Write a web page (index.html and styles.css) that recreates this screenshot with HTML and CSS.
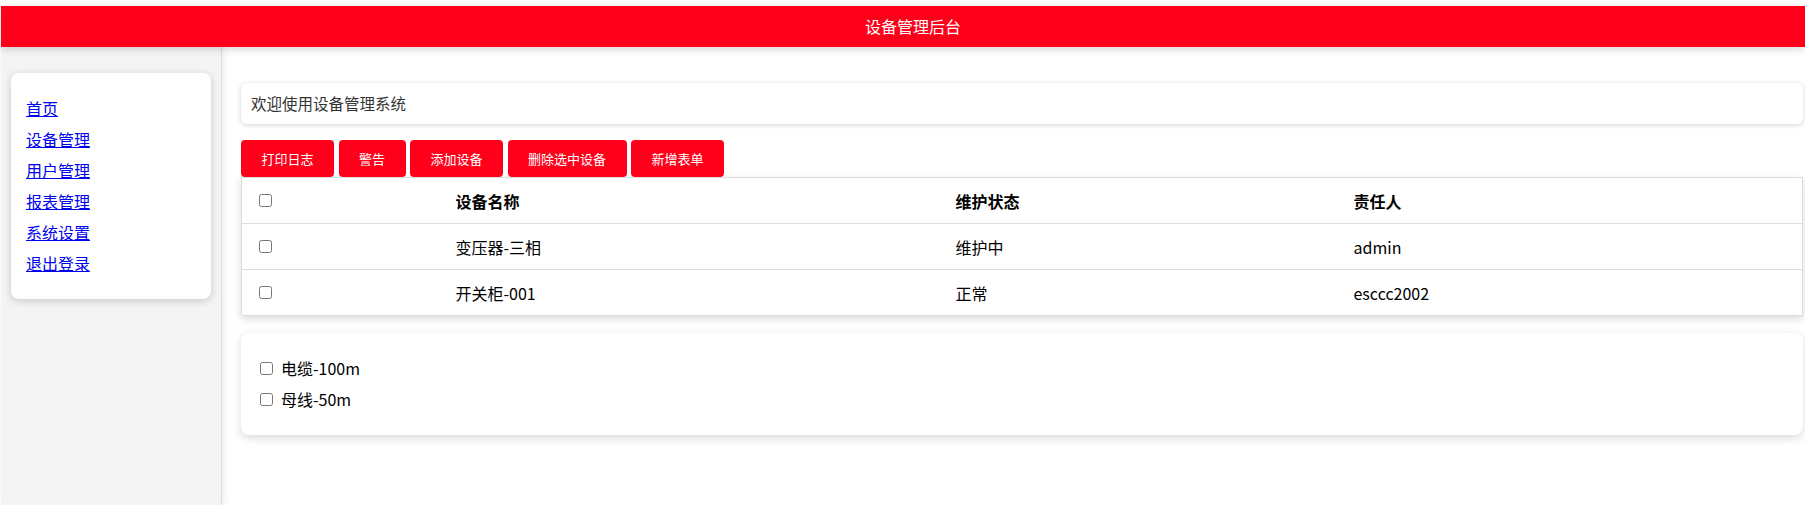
FILE: index.html
```html
<!DOCTYPE html>
<html lang="zh-CN">
<head>
<meta charset="utf-8">
<title>设备管理后台</title>
<link rel="stylesheet" href="styles.css">
</head>
<body>
<div class="page">
  <header class="topbar">设备管理后台</header>
  <div class="layout">
    <aside class="sidebar">
      <nav class="menu">
        <a href="#">首页</a>
        <a href="#">设备管理</a>
        <a href="#">用户管理</a>
        <a href="#">报表管理</a>
        <a href="#">系统设置</a>
        <a href="#">退出登录</a>
      </nav>
    </aside>
    <main class="main">
      <div class="welcome">欢迎使用设备管理系统</div>
      <div class="toolbar">
        <button class="btn">打印日志</button>
        <button class="btn">警告</button>
        <button class="btn">添加设备</button>
        <button class="btn">删除选中设备</button>
        <button class="btn">新增表单</button>
      </div>
      <table class="grid">
        <colgroup>
          <col class="c1"><col class="c2"><col class="c3"><col class="c4">
        </colgroup>
        <thead>
          <tr><th class="chk"><input type="checkbox"></th><th>设备名称</th><th>维护状态</th><th>责任人</th></tr>
        </thead>
        <tbody>
          <tr><td class="chk"><input type="checkbox"></td><td>变压器-三相</td><td>维护中</td><td>admin</td></tr>
          <tr><td class="chk"><input type="checkbox"></td><td>开关柜-001</td><td>正常</td><td>esccc2002</td></tr>
        </tbody>
      </table>
      <div class="items">
        <label class="item"><input type="checkbox">电缆-100m</label>
        <label class="item"><input type="checkbox">母线-50m</label>
      </div>
    </main>
  </div>
</div>
</body>
</html>
```

FILE: styles.css
```css
* { box-sizing: border-box; }
html, body { margin: 0; padding: 0; height: 100%; }
body {
  font-family: "Noto Sans CJK SC", "Noto Sans", sans-serif;
  font-size: 16px;
  color: #000;
  background: #fff;
  overflow: hidden;
}
.page {
  padding-top: 6px;
  height: 100%;
  display: flex;
  flex-direction: column;
}
.topbar {
  position: relative;
  z-index: 2;
  margin-left: 1px;
  height: 41px;
  line-height: 41px;
  background: #ff001a;
  color: #fff;
  font-size: 16px;
  text-align: center;
  padding-left: 20px;
  box-shadow: 0 2px 8px rgba(0,0,0,0.18);
  flex: none;
}
.layout {
  flex: 1;
  display: flex;
  margin-left: 1px;
}
.sidebar {
  position: relative;
  z-index: 1;
  width: 221px;
  flex: none;
  background: #f4f4f4;
  border-right: 1px solid #dcdcdc;
  padding: 26px 10px 0 10px;
  box-shadow: 2px 0 8px rgba(0,0,0,0.08);
}
.menu {
  background: #fff;
  border-radius: 8px;
  box-shadow: 0 2px 8px rgba(0,0,0,0.18);
  padding: 20px 15px;
  display: flex;
  flex-direction: column;
}
.menu a {
  color: #0000ee;
  text-decoration: underline;
  font-size: 16px;
  line-height: 31px;
  height: 31px;
  align-self: flex-start;
}
.main {
  flex: 1;
  min-width: 0;
  padding: 36px 2px 0 19px;
}
.welcome {
  background: #fff;
  border-radius: 6px;
  box-shadow: 0 1px 5px rgba(0,0,0,0.18);
  padding: 10px 10px;
  line-height: 21px;
  color: #333;
  font-size: 15.5px;
}
.toolbar {
  display: flex;
  gap: 4.5px;
  margin-top: 16px;
}
.btn {
  height: 37px;
  padding: 0 20.5px;
  border: none;
  border-radius: 4px;
  background: #ff001a;
  color: #fff;
  font-family: inherit;
  font-size: 13px;
  cursor: pointer;
}
.grid {
  width: 100%;
  table-layout: fixed;
  border-collapse: collapse;
  background: #fff;
  border: 1px solid #dddddd;
  box-shadow: 0 3px 8px rgba(0,0,0,0.15);
}
.c1 { width: 204px; }
.c2 { width: 500px; }
.c3 { width: 398px; }
.grid th, .grid td {
  text-align: left;
  padding: 0 10px;
  height: 46px;
  line-height: 20px;
  vertical-align: middle;
  border-bottom: 1px solid #dddddd;
  font-size: 16px;
}
.grid th.chk, .grid td.chk { padding-left: 13px; }
.grid th { font-weight: bold; }
.grid tbody tr:last-child td { border-bottom: none; }
.grid input { margin: 0 0 0 4px; width: 13px; height: 13px; vertical-align: middle; display: block; }
.items {
  margin-top: 17px;
  background: #fff;
  border-radius: 8px;
  box-shadow: 0 3px 10px rgba(0,0,0,0.15);
  padding: 20px 17px;
  display: flex;
  flex-direction: column;
}
.item {
  line-height: 31px;
  height: 31px;
  font-size: 16px;
  display: flex;
  align-items: center;
}
.item input { margin: 0 8px 0 2px; width: 13px; height: 13px; }
```
